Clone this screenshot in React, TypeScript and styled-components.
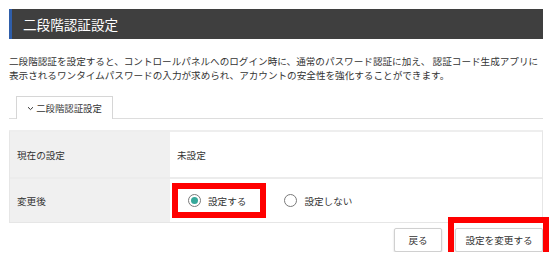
import React from "react";
import styled, { createGlobalStyle } from "styled-components";

const GlobalStyle = createGlobalStyle`
  html, body {
    margin: 0;
    padding: 0;
    background: #ffffff;
  }
  body {
    font-family: "Noto Sans CJK JP", "Noto Sans", sans-serif;
    color: #333333;
  }
`;

const Page = styled.div`
  width: 534px;
  padding: 9px 7px 0 9px;
`;

const Header = styled.h1`
  margin: 0;
  height: 30px;
  display: flex;
  align-items: center;
  padding-left: 11px;
  background: #3f3f3f;
  border-left: 3px solid #2f5eaa;
  color: #ffffff;
  font-size: 13.6px;
  font-weight: 400;
`;

const Description = styled.p`
  margin: 15px 0 0;
  font-size: 9.6px;
  line-height: 14px;
  color: #333333;
  white-space: nowrap;
`;

const TabBar = styled.div`
  margin-top: 14px;
  display: flex;
  padding-left: 7px;
  border-bottom: 1px solid #dddddd;
`;

const Tab = styled.div`
  width: 95px;
  height: 22px;
  display: flex;
  align-items: center;
  justify-content: center;
  gap: 2px;
  border: 1px solid #d6d6d6;
  border-bottom: none;
  background: #ffffff;
  margin-bottom: -1px;
  font-size: 9.4px;
  color: #333333;
`;

const Table = styled.div`
  margin-top: 11px;
  border: 1px solid #e6e6e6;
  border-top: 2px solid #eeeeee;
`;

const Row = styled.div<{ $height: number; $last?: boolean }>`
  display: flex;
  height: ${(p) => p.$height}px;
  border-bottom: ${(p) => (p.$last ? "none" : "2px solid #ececec")};
`;

const Label = styled.div`
  width: 153px;
  flex: none;
  display: flex;
  align-items: center;
  padding-left: 7px;
  background: #f0f0f0;
  font-size: 9.6px;
`;

const Value = styled.div`
  flex: 1;
  display: flex;
  align-items: center;
  padding-left: 7px;
  font-size: 9.6px;
`;

const Highlight = styled.div`
  display: flex;
  align-items: center;
  border: 6px solid #ff0000;
  margin-left: -5px;
  padding: 0 14px 0 10px;
  height: 23px;
`;

const RadioOption = styled.label`
  display: flex;
  align-items: center;
  gap: 7px;
  font-size: 9.6px;
  color: #333333;
`;

const RadioCircle = styled.span<{ $checked?: boolean }>`
  width: 11px;
  height: 11px;
  border-radius: 50%;
  border: 1px solid #7a7a7a;
  display: flex;
  align-items: center;
  justify-content: center;
  background: #ffffff;
  &::after {
    content: "";
    width: 7px;
    height: 7px;
    border-radius: 50%;
    background: ${(p) => (p.$checked ? "#35a89a" : "transparent")};
  }
`;

const PlainOption = styled.div`
  margin-left: 18px;
`;

const Actions = styled.div`
  margin-top: 5px;
  display: flex;
  justify-content: flex-end;
  gap: 13px;
`;

const Button = styled.button<{ $width: number }>`
  position: relative;
  width: ${(p) => p.$width}px;
  height: 24px;
  background: #ffffff;
  border: 1px solid #d0d0d0;
  border-radius: 2px;
  box-shadow: 0 1px 2px rgba(0, 0, 0, 0.18);
  font-family: "Noto Sans CJK JP", "Noto Sans", sans-serif;
  font-size: 9.6px;
  color: #333333;
  padding: 0;
  cursor: pointer;
`;

// red annotation frame drawn over the submit button
const ButtonMark = styled.span`
  position: absolute;
  top: -12px;
  right: -7px;
  bottom: -11px;
  left: -8px;
  border: 6px solid #ff0000;
  pointer-events: none;
`;

const Chevron = () => (
  <svg width="7" height="5" viewBox="0 0 7 5">
    <path d="M1 1.2 L3.5 3.6 L6 1.2" fill="none" stroke="#333" strokeWidth="1" />
  </svg>
);

export default function App() {
  return (
    <>
      <GlobalStyle />
      <Page>
        <Header>二段階認証設定</Header>
        <Description>
          二段階認証を設定すると、コントロールパネルへのログイン時に、通常のパスワード認証に加え、 認証コード生成アプリに
          <br />
          表示されるワンタイムパスワードの入力が求められ、アカウントの安全性を強化することができます。
        </Description>
        <TabBar>
          <Tab>
            <Chevron />
            二段階認証設定
          </Tab>
        </TabBar>
        <Table>
          <Row $height={45}>
            <Label>現在の設定</Label>
            <Value>未設定</Value>
          </Row>
          <Row $height={43} $last>
            <Label>変更後</Label>
            <Value>
              <Highlight>
                <RadioOption>
                  <RadioCircle $checked />
                  設定する
                </RadioOption>
              </Highlight>
              <PlainOption>
                <RadioOption>
                  <RadioCircle />
                  設定しない
                </RadioOption>
              </PlainOption>
            </Value>
          </Row>
        </Table>
        <Actions>
          <Button $width={48}>戻る</Button>
          <Button $width={88}>
            設定を変更する
            <ButtonMark />
          </Button>
        </Actions>
      </Page>
    </>
  );
}
